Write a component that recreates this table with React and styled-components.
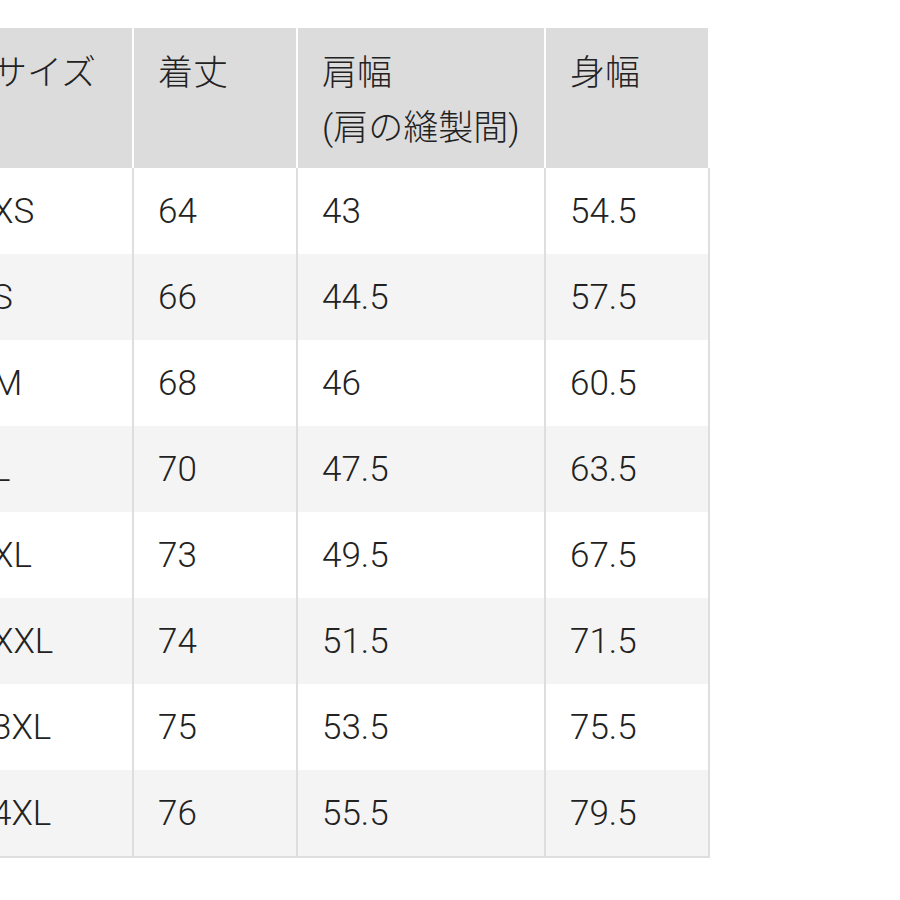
import React from "react";
import styled, { createGlobalStyle } from "styled-components";

const GlobalStyle = createGlobalStyle`
  * { box-sizing: border-box; }
  html, body {
    margin: 0;
    padding: 0;
    background: #ffffff;
  }
  body {
    font-family: Roboto, "Noto Sans CJK JP", sans-serif;
    font-weight: 300;
    color: #222222;
    overflow: hidden;
  }
`;

const Page = styled.div`
  width: 900px;
  height: 900px;
  padding-top: 28px;
  overflow: hidden;
`;

const Table = styled.div`
  margin-left: -32px;
  width: 742px;
  display: grid;
  grid-template-columns: 166px 164px 248px 164px;
  font-size: 35px;
`;

const HeadCell = styled.div`
  background: #dcdcdc;
  border-right: 2px solid #ffffff;
  padding: 18px 16px 12px 24px;
  line-height: 55px;
  min-height: 140px;
  color: #222222;
`;

const Cell = styled.div`
  display: flex;
  align-items: center;
  padding-left: 24px;
  background: ${(p) => (p.$alt ? "#f4f4f4" : "#ffffff")};
  border-right: 2px solid #dedede;
  border-bottom: ${(p) => (p.$last ? "2px solid #dedede" : "none")};
  height: ${(p) => (p.$last ? "88px" : "86px")};
  color: #222222;
`;

const headers = ["サイズ", "着丈", ["肩幅", "(肩の縫製間)"], "身幅"];

const rows = [
  ["XS", "64", "43", "54.5"],
  ["S", "66", "44.5", "57.5"],
  ["M", "68", "46", "60.5"],
  ["L", "70", "47.5", "63.5"],
  ["XL", "73", "49.5", "67.5"],
  ["XXL", "74", "51.5", "71.5"],
  ["3XL", "75", "53.5", "75.5"],
  ["4XL", "76", "55.5", "79.5"],
];

export default function App() {
  return (
    <>
      <GlobalStyle />
      <Page>
        <Table>
          {headers.map((h, i) => (
            <HeadCell key={i}>
              {Array.isArray(h)
                ? h.map((line) => <div key={line}>{line}</div>)
                : h}
            </HeadCell>
          ))}
          {rows.map((row, r) =>
            row.map((val, c) => (
              <Cell
                key={`${r}-${c}`}
                $alt={r % 2 === 1}
                $last={r === rows.length - 1}
              >
                {val}
              </Cell>
            ))
          )}
        </Table>
      </Page>
    </>
  );
}
